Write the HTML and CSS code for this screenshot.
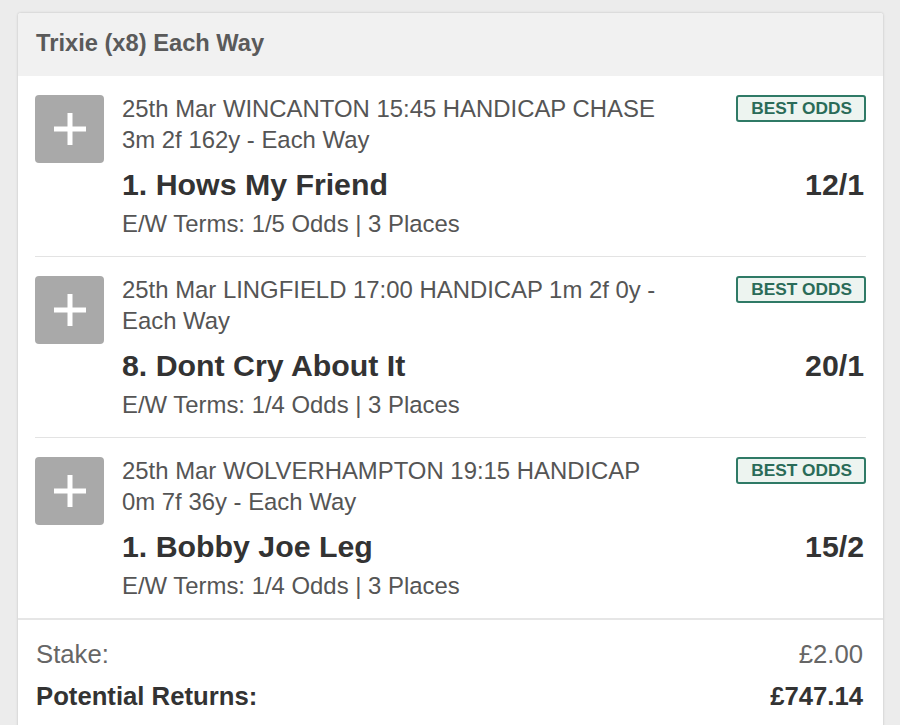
FILE: index.html
```html
<!DOCTYPE html>
<html>
<head>
<meta charset="utf-8">
<link rel="stylesheet" href="styles.css">
</head>
<body>
<div class="card">
  <div class="card-header">Trixie (x8) Each Way</div>
  <div class="rows">
    <div class="row">
      <div class="plus"><svg width="34" height="34" viewBox="0 0 34 34"><path d="M17 1V33M1 17H33" stroke="#fff" stroke-width="5"/></svg></div>
      <div class="details">
        <div class="top">
          <div class="race">25th Mar WINCANTON 15:45 HANDICAP CHASE 3m 2f 162y - Each Way</div>
          <div class="badge">BEST ODDS</div>
        </div>
        <div class="runner"><span>1. Hows My Friend</span><span class="odds">12/1</span></div>
        <div class="terms">E/W Terms: 1/5 Odds | 3 Places</div>
      </div>
    </div>
    <div class="row">
      <div class="plus"><svg width="34" height="34" viewBox="0 0 34 34"><path d="M17 1V33M1 17H33" stroke="#fff" stroke-width="5"/></svg></div>
      <div class="details">
        <div class="top">
          <div class="race">25th Mar LINGFIELD 17:00 HANDICAP 1m 2f 0y - Each Way</div>
          <div class="badge">BEST ODDS</div>
        </div>
        <div class="runner"><span>8. Dont Cry About It</span><span class="odds">20/1</span></div>
        <div class="terms">E/W Terms: 1/4 Odds | 3 Places</div>
      </div>
    </div>
    <div class="row">
      <div class="plus"><svg width="34" height="34" viewBox="0 0 34 34"><path d="M17 1V33M1 17H33" stroke="#fff" stroke-width="5"/></svg></div>
      <div class="details">
        <div class="top">
          <div class="race">25th Mar WOLVERHAMPTON 19:15 HANDICAP 0m 7f 36y - Each Way</div>
          <div class="badge">BEST ODDS</div>
        </div>
        <div class="runner"><span>1. Bobby Joe Leg</span><span class="odds">15/2</span></div>
        <div class="terms">E/W Terms: 1/4 Odds | 3 Places</div>
      </div>
    </div>
  </div>
  <div class="footer">
    <div class="line stake"><span>Stake:</span><span>£2.00</span></div>
    <div class="line returns"><span>Potential Returns:</span><span>£747.14</span></div>
  </div>
</div>
</body>
</html>
```
FILE: styles.css
```css
html, body {
  margin: 0;
  padding: 0;
  background: #ececec;
  font-family: "Liberation Sans", Arial, sans-serif;
}
body {
  padding: 12px 16px 0 17px;
}
.card {
  background: #fff;
  border: 1px solid #dcdcdc;
  border-radius: 4px;
  box-shadow: 0 0 2px rgba(0,0,0,0.08);
  overflow: hidden;
}
.card-header {
  background: #f1f1f1;
  height: 63px;
  padding-left: 18px;
  font-size: 23.7px;
  font-weight: bold;
  color: #5a5a5a;
  line-height: 60px;
}
.rows {
  padding: 0 17px;
}
.row {
  display: flex;
  gap: 18px;
  padding: 17px 0 17px;
  border-bottom: 1px solid #e3e3e3;
}
.row:last-child {
  border-bottom: none;
}
.plus {
  flex: none;
  width: 69px;
  height: 68px;
  margin-top: 2px;
  background: #a9a9a9;
  border-radius: 4px;
  display: flex;
  align-items: center;
  justify-content: center;
}
.details {
  flex: 1;
  min-width: 0;
}
.top {
  display: flex;
  justify-content: space-between;
  align-items: flex-start;
  gap: 20px;
}
.race {
  font-size: 23.9px;
  line-height: 31px;
  color: #555;
  width: 545px;
}
.badge {
  flex: none;
  margin-top: 2px;
  border: 2px solid #2f7a66;
  border-radius: 3px;
  background: #edf4f0;
  color: #2a6b58;
  font-size: 17.3px;
  font-weight: bold;
  line-height: 23px;
  padding: 0 12px 0 13px;
}
.runner {
  display: flex;
  justify-content: space-between;
  margin-top: 13px;
  font-size: 30.3px;
  font-weight: bold;
  line-height: 34px;
  color: #333;
}
.odds {
  padding-right: 2px;
}
.terms {
  margin-top: 6px;
  font-size: 23.9px;
  line-height: 31px;
  color: #555;
}
.footer {
  border-top: 2px solid #e6e6e6;
  padding: 18px 20px 20px 18px;
}
.line {
  display: flex;
  justify-content: space-between;
  font-size: 25.7px;
  line-height: 32px;
}
.stake {
  color: #666;
}
.returns {
  margin-top: 10px;
  font-weight: bold;
  color: #333;
}
```
